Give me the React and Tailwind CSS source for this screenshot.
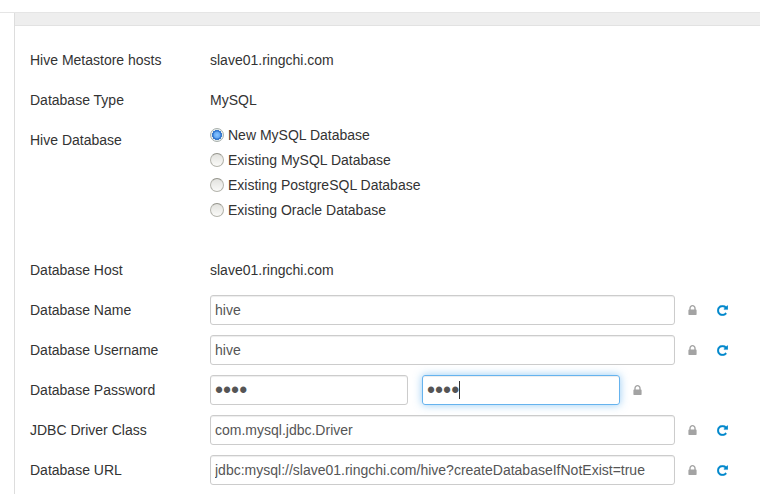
import { useState } from "react";

const LABEL = "w-[180px] shrink-0 pt-[5px]";
const FIELD =
  "h-[30px] min-w-0 rounded-[3px] border px-1 text-[#555555] outline-none";
const NORMAL = "border-[#cccccc] shadow-[inset_0_1px_1px_rgba(0,0,0,0.075)]";
const FOCUSED =
  "border-[#66b3ee] shadow-[inset_0_1px_1px_rgba(0,0,0,0.075),0_0_8px_rgba(82,168,236,0.6)]";
const SECRET = "text-[23px]";

function Lock() {
  return (
    <svg viewBox="0 0 1152 1408" className="h-[10px] w-[9px] shrink-0 fill-[#a3a3a3]" aria-hidden="true">
      <path d="M320 640h512v-192q0-106-75-181t-181-75-181 75-75 181v192zm832 96v576q0 40-28 68t-68 28h-960q-40 0-68-28t-28-68v-576q0-40 28-68t68-28h32v-192q0-184 132-316t316-132 316 132 132 316v192h32q40 0 68 28t28 68z" />
    </svg>
  );
}

function Refresh() {
  return (
    <svg
      viewBox="-20 -20 1576 1576"
      className="h-[11px] w-[11px] fill-[#0088cc] stroke-[#0088cc] stroke-[40]"
      aria-hidden="true"
    >
      <path d="M1536 128v448q0 26-19 45t-45 19h-448q-42 0-59-40-17-39 14-69l138-138q-148-137-349-137-104 0-198.5 40.5t-163.5 109.5-109.5 163.5-40.5 198.5 40.5 198.5 109.5 163.5 163.5 109.5 198.5 40.5q119 0 225-52t179-147q7-10 23-12 15 0 25 9l137 138q9 8 9.5 20.5t-7.5 22.5q-109 132-264 204.5t-327 72.5q-156 0-298-61t-245-164-164-245-61-298 61-298 164-245 245-164 298-61q147 0 284.5 55.5t244.5 156.5l130-129q29-31 70-14 39 17 39 59z" />
    </svg>
  );
}

function StaticRow({ label, value }) {
  return (
    <div className="flex h-[30px]">
      <div className={LABEL}>{label}</div>
      <div className="pt-[5px]">{value}</div>
    </div>
  );
}

function TextRow({ id, label, initial }) {
  const [value, setValue] = useState(initial);
  return (
    <div className="flex">
      <label htmlFor={id} className={LABEL}>{label}</label>
      <div className="flex min-w-0 flex-1 items-center">
        <input
          id={id}
          type="text"
          value={value}
          onChange={(e) => setValue(e.target.value)}
          className={`${FIELD} ${NORMAL} mr-[13px] flex-1 text-sm`}
        />
        <Lock />
        <button
          type="button"
          aria-label={`Restore ${label}`}
          onClick={() => setValue(initial)}
          className="ml-5 mr-8 flex cursor-pointer"
        >
          <Refresh />
        </button>
      </div>
    </div>
  );
}

const OPTIONS = [
  "New MySQL Database",
  "Existing MySQL Database",
  "Existing PostgreSQL Database",
  "Existing Oracle Database",
];

const RADIO =
  "h-[14px] w-[14px] appearance-none rounded-full border border-[#b4b4ac] border-t-[#94948c] bg-linear-to-b from-[#e2e2de] to-[#fafaf8] checked:border-[#a9b0ac] checked:bg-[radial-gradient(circle_at_50%_50%,#8cc6ff_0px,#62a8f4_3px,#2e70c8_4px,#3f7fd0_5px,#e8eeee_5px)]";

export default function App() {
  const [choice, setChoice] = useState(OPTIONS[0]);
  return (
    <div className="min-h-screen bg-white pt-3 font-['Liberation_Sans',Arial,sans-serif] text-sm text-[#333333]">
      <div className="border-t border-[#e5e5e5] pl-[14px]">
        <main className="min-h-[calc(100vh-13px)] border-l border-[#dddddd]">
          <div className="h-[13px] border-b border-[#e2e2e2] bg-[#eeeeee]" />
          <form className="flex flex-col gap-[10px] pt-[19px] pl-[15px]">
            <StaticRow label="Hive Metastore hosts" value="slave01.ringchi.com" />
            <StaticRow label="Database Type" value="MySQL" />
            <fieldset className="flex h-[120px]" aria-labelledby="hive-database">
              <div id="hive-database" className={LABEL}>Hive Database</div>
              <div className="flex flex-col gap-[5px]">
                {OPTIONS.map((name) => (
                  <label key={name} className="flex h-5 items-center gap-1">
                    <input
                      type="radio"
                      name="database"
                      checked={choice === name}
                      onChange={() => setChoice(name)}
                      className={RADIO}
                    />
                    {name}
                  </label>
                ))}
              </div>
            </fieldset>
            <StaticRow label="Database Host" value="slave01.ringchi.com" />
            <TextRow id="name" label="Database Name" initial="hive" />
            <TextRow id="username" label="Database Username" initial="hive" />
            <div className="flex">
              <label htmlFor="password" className={LABEL}>Database Password</label>
              <div className="flex min-w-0 flex-1 items-center">
                <input
                  id="password"
                  type="password"
                  defaultValue="hive"
                  className={`${FIELD} ${NORMAL} ${SECRET} mr-[14px] w-[36%]`}
                />
                <div className="relative mr-[13px] flex w-[36%]">
                  <input
                    type="password"
                    aria-label="Confirm Database Password"
                    defaultValue="hive"
                    className={`${FIELD} ${FOCUSED} ${SECRET} w-full caret-transparent`}
                  />
                  <span className="absolute top-[6px] left-[37px] h-[18px] w-px bg-[#333333]" />
                </div>
                <Lock />
              </div>
            </div>
            <TextRow id="driver" label="JDBC Driver Class" initial="com.mysql.jdbc.Driver" />
            <TextRow
              id="url"
              label="Database URL"
              initial="jdbc:mysql://slave01.ringchi.com/hive?createDatabaseIfNotExist=true"
            />
          </form>
        </main>
      </div>
    </div>
  );
}
